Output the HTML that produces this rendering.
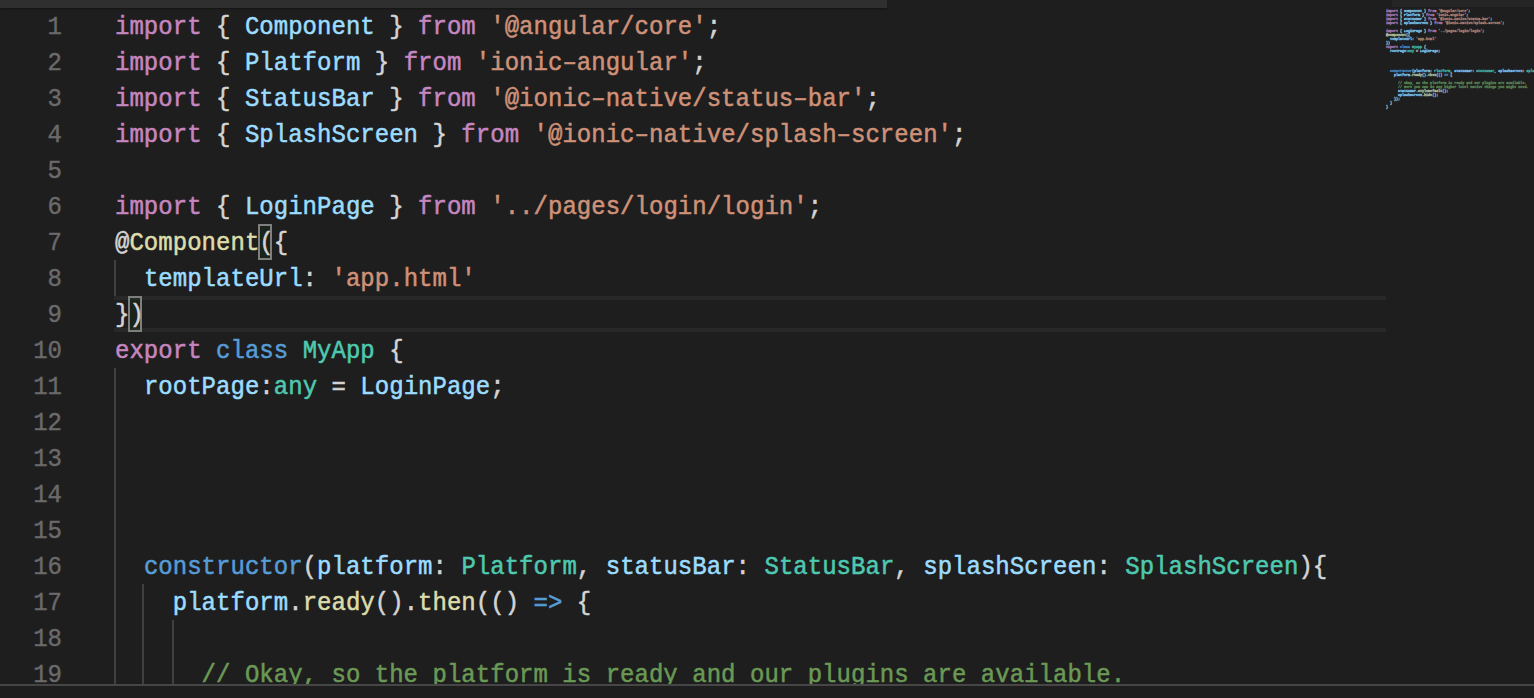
<!DOCTYPE html>
<html><head><meta charset="utf-8">
<style>
html,body{margin:0;padding:0;}
body{width:1534px;height:698px;overflow:hidden;background:#1e1e1e;position:relative;font-family:"Liberation Mono",monospace;}
.ts{position:absolute;left:0;top:0;width:887px;height:8px;background:#2f2f2f;box-shadow:0 1px 2px rgba(0,0,0,0.35);}
.ts2{position:absolute;left:1392px;top:0;width:142px;height:7px;background:#252525;}
.ln{position:absolute;left:0;width:62px;text-align:right;color:#6a6a6a;font-size:24px;line-height:36px;height:36px;margin-top:2px;transform-origin:0 24.4px;transform:scaleY(1.08);-webkit-text-stroke:0.4px #6a6a6a;}
.cl{position:absolute;left:115px;white-space:pre;font-size:24px;line-height:36px;height:36px;color:#d4d4d4;letter-spacing:0.028px;margin-top:2px;transform-origin:0 24.4px;transform:scaleY(1.08);-webkit-text-stroke:0.5px currentColor;}
.k{color:#c586c0}.v{color:#9cdcfe}.s{color:#ce9178}.f{color:#dcdcaa}.b{color:#569cd6}.t{color:#4ec9b0}.c{color:#6a9955}
.g{position:absolute;width:2px;background:#404040;}
.cur{position:absolute;left:114px;width:1272px;height:28px;border-top:4px solid #282828;border-bottom:4px solid #282828;}
.bm{position:absolute;width:14px;height:36px;border:2px solid #7f7f7f;background:rgba(0,100,0,0.1);box-sizing:border-box;}
.bot{position:absolute;left:0;top:684px;width:1534px;height:14px;background:#1e1e1e;border-top:2px solid #464646;box-sizing:border-box;}
.mm{position:absolute;left:1386px;top:8.5px;opacity:0.85;width:1000px;transform-origin:0 0;transform:scale(0.13877,0.16667);}
.mm div{white-space:pre;font-size:24px;line-height:24px;height:24px;color:#d4d4d4;letter-spacing:0.05px;font-weight:bold;-webkit-text-stroke:2px currentColor;}
</style></head><body>
<div class="ts"></div><div class="ts2"></div>
<!-- current line -->
<div class="cur" style="top:296px"></div>
<!-- indent guides -->
<div class="g" style="left:114px;top:260px;height:36px"></div>
<div class="g" style="left:114px;top:368px;height:324px"></div>
<div class="g" style="left:142px;top:584px;height:108px"></div>
<div class="g" style="left:172px;top:620px;height:72px"></div>
<!-- bracket match -->
<div class="bm" style="left:258px;top:224px"></div>
<div class="bm" style="left:128px;top:296px"></div>

<div class="ln" style="top:8px">1</div>
<div class="ln" style="top:44px">2</div>
<div class="ln" style="top:80px">3</div>
<div class="ln" style="top:116px">4</div>
<div class="ln" style="top:152px">5</div>
<div class="ln" style="top:188px">6</div>
<div class="ln" style="top:224px">7</div>
<div class="ln" style="top:260px">8</div>
<div class="ln" style="top:296px">9</div>
<div class="ln" style="top:332px">10</div>
<div class="ln" style="top:368px">11</div>
<div class="ln" style="top:404px">12</div>
<div class="ln" style="top:440px">13</div>
<div class="ln" style="top:476px">14</div>
<div class="ln" style="top:512px">15</div>
<div class="ln" style="top:548px">16</div>
<div class="ln" style="top:584px">17</div>
<div class="ln" style="top:620px">18</div>
<div class="ln" style="top:656px">19</div>

<div class="cl" style="top:8px"><span class="k">import</span> { <span class="v">Component</span> } <span class="k">from</span> <span class="s">'@angular/core'</span>;</div>
<div class="cl" style="top:44px"><span class="k">import</span> { <span class="v">Platform</span> } <span class="k">from</span> <span class="s">'ionic&#8211;angular'</span>;</div>
<div class="cl" style="top:80px"><span class="k">import</span> { <span class="v">StatusBar</span> } <span class="k">from</span> <span class="s">'@ionic&#8211;native/status&#8211;bar'</span>;</div>
<div class="cl" style="top:116px"><span class="k">import</span> { <span class="v">SplashScreen</span> } <span class="k">from</span> <span class="s">'@ionic&#8211;native/splash&#8211;screen'</span>;</div>
<div class="cl" style="top:188px"><span class="k">import</span> { <span class="v">LoginPage</span> } <span class="k">from</span> <span class="s">'../pages/login/login'</span>;</div>
<div class="cl" style="top:224px">@<span class="f">Component</span>({</div>
<div class="cl" style="top:260px">  <span class="v">templateUrl</span>: <span class="s">'app.html'</span></div>
<div class="cl" style="top:296px">})</div>
<div class="cl" style="top:332px"><span class="k">export</span> <span class="b">class</span> <span class="t">MyApp</span> {</div>
<div class="cl" style="top:368px">  <span class="v">rootPage</span>:<span class="t">any</span> = <span class="v">LoginPage</span>;</div>
<div class="cl" style="top:548px">  <span class="b">constructor</span>(<span class="v">platform</span>: <span class="t">Platform</span>, <span class="v">statusBar</span>: <span class="t">StatusBar</span>, <span class="v">splashScreen</span>: <span class="t">SplashScreen</span>){</div>
<div class="cl" style="top:584px">    <span class="v">platform</span>.<span class="f">ready</span>().<span class="f">then</span>(() <span class="b">=&gt;</span> {</div>
<div class="cl" style="top:656px">      <span class="c">// Okay, so the platform is ready and our plugins are available.</span></div>

<div class="bot"></div>

<div class="mm">
<div><span class="k">import</span> { <span class="v">Component</span> } <span class="k">from</span> <span class="s">'@angular/core'</span>;</div>
<div><span class="k">import</span> { <span class="v">Platform</span> } <span class="k">from</span> <span class="s">'ionic&#8211;angular'</span>;</div>
<div><span class="k">import</span> { <span class="v">StatusBar</span> } <span class="k">from</span> <span class="s">'@ionic&#8211;native/status&#8211;bar'</span>;</div>
<div><span class="k">import</span> { <span class="v">SplashScreen</span> } <span class="k">from</span> <span class="s">'@ionic&#8211;native/splash&#8211;screen'</span>;</div>
<div> </div>
<div><span class="k">import</span> { <span class="v">LoginPage</span> } <span class="k">from</span> <span class="s">'../pages/login/login'</span>;</div>
<div>@<span class="f">Component</span>({</div>
<div>  <span class="v">templateUrl</span>: <span class="s">'app.html'</span></div>
<div>})</div>
<div><span class="k">export</span> <span class="b">class</span> <span class="t">MyApp</span> {</div>
<div>  <span class="v">rootPage</span>:<span class="t">any</span> = <span class="v">LoginPage</span>;</div>
<div> </div>
<div> </div>
<div> </div>
<div> </div>
<div>  <span class="b">constructor</span>(<span class="v">platform</span>: <span class="t">Platform</span>, <span class="v">statusBar</span>: <span class="t">StatusBar</span>, <span class="v">splashScreen</span>: <span class="t">SplashScreen</span>){</div>
<div>    <span class="v">platform</span>.<span class="f">ready</span>().<span class="f">then</span>(() <span class="b">=&gt;</span> {</div>
<div> </div>
<div>      <span class="c">// Okay, so the platform is ready and our plugins are available.</span></div>
<div>      <span class="c">// Here you can do any higher level native things you might need.</span></div>
<div>      <span class="v">statusBar</span>.<span class="f">styleDefault</span>();</div>
<div>      <span class="v">splashScreen</span>.<span class="f">hide</span>();</div>
<div>    });</div>
<div>  }</div>
<div>}</div>
</div>
</body></html>
